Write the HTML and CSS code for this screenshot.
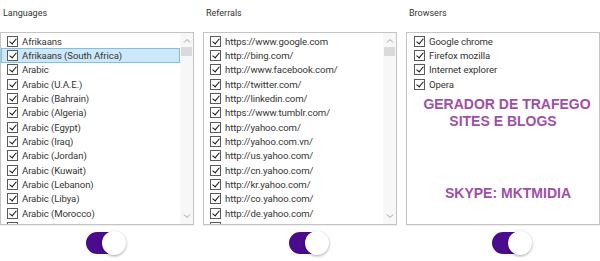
FILE: index.html
```html
<!DOCTYPE html>
<html>
<head>
<meta charset="utf-8">
<link rel="stylesheet" href="styles.css">
</head>
<body>
<div class="panels">
  <div class="col">
    <div class="label">Languages</div>
    <div class="box">
      <ul class="list">
        <li class="item"><span class="cb"></span>Afrikaans</li>
        <li class="item sel"><span class="cb"></span>Afrikaans (South Africa)</li>
        <li class="item"><span class="cb"></span>Arabic</li>
        <li class="item"><span class="cb"></span>Arabic (U.A.E.)</li>
        <li class="item"><span class="cb"></span>Arabic (Bahrain)</li>
        <li class="item"><span class="cb"></span>Arabic (Algeria)</li>
        <li class="item"><span class="cb"></span>Arabic (Egypt)</li>
        <li class="item"><span class="cb"></span>Arabic (Iraq)</li>
        <li class="item"><span class="cb"></span>Arabic (Jordan)</li>
        <li class="item"><span class="cb"></span>Arabic (Kuwait)</li>
        <li class="item"><span class="cb"></span>Arabic (Lebanon)</li>
        <li class="item"><span class="cb"></span>Arabic (Libya)</li>
        <li class="item"><span class="cb"></span>Arabic (Morocco)</li>
        <li class="item"><span class="cb"></span>Arabic (Oman)</li>
      </ul>
      <div class="scroll">
        <svg class="arrow" viewBox="0 0 8 5" width="8" height="5"><path d="M1 4.5 L4 1.5 L7 4.5" fill="none" stroke="#a0a0a0" stroke-width="1"/></svg>
        <div class="thumb"></div>
        <div class="track"></div>
        <svg class="arrow" viewBox="0 0 8 5" width="8" height="5"><path d="M1 0.5 L4 3.5 L7 0.5" fill="none" stroke="#a0a0a0" stroke-width="1"/></svg>
      </div>
    </div>
    <div class="toggle"><span class="knob"></span></div>
  </div>
  <div class="col">
    <div class="label">Referrals</div>
    <div class="box">
      <ul class="list">
        <li class="item"><span class="cb"></span>https://www.google.com</li>
        <li class="item"><span class="cb"></span>http://bing.com/</li>
        <li class="item"><span class="cb"></span>http://www.facebook.com/</li>
        <li class="item"><span class="cb"></span>http://twitter.com/</li>
        <li class="item"><span class="cb"></span>http://linkedin.com/</li>
        <li class="item"><span class="cb"></span>https://www.tumblr.com/</li>
        <li class="item"><span class="cb"></span>http://yahoo.com/</li>
        <li class="item"><span class="cb"></span>http://yahoo.com.vn/</li>
        <li class="item"><span class="cb"></span>http://us.yahoo.com/</li>
        <li class="item"><span class="cb"></span>http://cn.yahoo.com/</li>
        <li class="item"><span class="cb"></span>http://kr.yahoo.com/</li>
        <li class="item"><span class="cb"></span>http://co.yahoo.com/</li>
        <li class="item"><span class="cb"></span>http://de.yahoo.com/</li>
        <li class="item"><span class="cb"></span>http://fr.yahoo.com/</li>
      </ul>
      <div class="scroll">
        <svg class="arrow" viewBox="0 0 8 5" width="8" height="5"><path d="M1 4.5 L4 1.5 L7 4.5" fill="none" stroke="#a0a0a0" stroke-width="1"/></svg>
        <div class="thumb"></div>
        <div class="track"></div>
        <svg class="arrow" viewBox="0 0 8 5" width="8" height="5"><path d="M1 0.5 L4 3.5 L7 0.5" fill="none" stroke="#a0a0a0" stroke-width="1"/></svg>
      </div>
    </div>
    <div class="toggle"><span class="knob"></span></div>
  </div>
  <div class="col">
    <div class="label">Browsers</div>
    <div class="box">
      <div class="list">
        <ul class="plain">
          <li class="item wide"><span class="cb"></span>Google chrome</li>
          <li class="item wide"><span class="cb"></span>Firefox mozilla</li>
          <li class="item wide"><span class="cb"></span>Internet explorer</li>
          <li class="item wide"><span class="cb"></span>Opera</li>
        </ul>
        <div class="promo">
          <div class="promo-line first">GERADOR DE TRAFEGO</div>
          <div class="promo-line">SITES E BLOGS</div>
        </div>
        <div class="promo skype">SKYPE: MKTMIDIA</div>
      </div>
    </div>
    <div class="toggle"><span class="knob"></span></div>
  </div>
</div>
</body>
</html>
```

FILE: styles.css
```css
html, body {
  margin: 0;
  padding: 0;
  background: #ffffff;
}
body {
  font-family: Roboto, "Noto Sans", sans-serif;
  color: #333333;
  width: 600px;
  height: 261px;
  overflow: hidden;
}
.panels {
  display: flex;
  gap: 9px;
}
.col {
  width: 194px;
  display: flex;
  flex-direction: column;
}
.label {
  height: 32px;
  line-height: 26px;
  font-size: 9px;
  padding-left: 3px;
  color: #333;
}
.box {
  height: 193px;
  box-sizing: border-box;
  border: 1px solid #c4c4c4;
  display: flex;
  overflow: hidden;
  box-shadow: 0 1px 1px rgba(0,0,0,0.06);
}
.list {
  flex: 1;
  margin: 0;
  padding: 1px 0 0 0;
  list-style: none;
  overflow: hidden;
  display: flex;
  flex-direction: column;
}
.plain {
  margin: 0;
  padding: 0;
  list-style: none;
}
.item {
  height: 14.33px;
  flex: none;
  box-sizing: border-box;
  display: flex;
  align-items: center;
  font-size: 9.6px;
  letter-spacing: -0.1px;
  padding-left: 5px;
  white-space: nowrap;
  border: 1px solid transparent;
  color: #353535;
}
.item.wide {
  padding-left: 6px;
}
.item.sel {
  background: #cde8fb;
  border-color: #7fbfe8;
}
.cb {
  width: 11px;
  height: 11px;
  box-sizing: border-box;
  border: 1px solid #5a5a5a;
  background: #fff;
  margin-right: 4px;
  position: relative;
  flex: none;
}
.cb::after {
  content: "";
  position: absolute;
  left: 3px;
  top: 0px;
  width: 3px;
  height: 6px;
  border-right: 1.6px solid #111;
  border-bottom: 1.6px solid #111;
  transform: rotate(40deg);
}
.scroll {
  width: 13px;
  flex: none;
  background: #f7f7f7;
  display: flex;
  flex-direction: column;
  align-items: center;
}
.arrow {
  display: block;
  margin: 5px 0 4px;
}
.scroll .arrow:last-child {
  margin: 4px 0 5px;
}
.thumb {
  width: 11px;
  height: 9px;
  background: #dadada;
}
.track {
  flex: 1;
}
.toggle {
  margin-top: 7px;
  margin-left: 86px;
  width: 38px;
  height: 22px;
  border-radius: 11px;
  background: #4a0b8c;
  position: relative;
}
.knob {
  position: absolute;
  right: -2px;
  top: -1px;
  width: 24px;
  height: 24px;
  border-radius: 50%;
  background: #ffffff;
  box-shadow: 0 1px 3px rgba(0,0,0,0.35);
}
.promo {
  font-family: "Liberation Sans", Arial, sans-serif;
  font-weight: bold;
  color: #9e4fa8;
  font-size: 14px;
  text-align: center;
  line-height: 17px;
  margin-top: 5px;
}
.promo-line.first {
  padding-left: 8px;
}
.skype {
  margin-top: 55px;
  padding-left: 10px;
}
```
